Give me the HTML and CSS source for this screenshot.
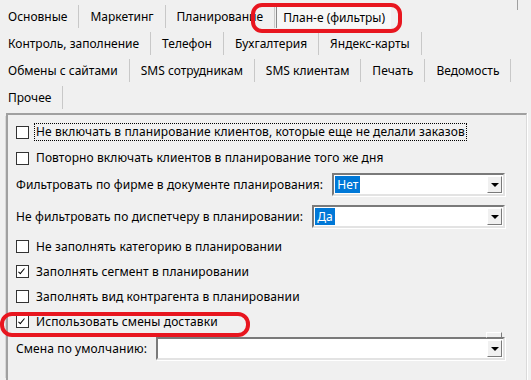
FILE: index.html
```html
<!DOCTYPE html>
<html lang="ru">
<head>
  <meta charset="UTF-8" />
  <title>Настройки планирования</title>
  <link rel="stylesheet" href="styles.css">
</head>
<body>
  <div class="tabs">
    <div class="tab-row row1">
      <div class="tab">Основные</div>
      <div class="tab">Маркетинг</div>
      <div class="tab">Планирование</div>
      <div class="tab active">План-е (фильтры)</div>
    </div>
    <div class="tab-row">
      <div class="tab">Контроль, заполнение</div>
      <div class="tab">Телефон</div>
      <div class="tab">Бухгалтерия</div>
      <div class="tab">Яндекс-карты</div>
    </div>
    <div class="tab-row">
      <div class="tab">Обмены с сайтами</div>
      <div class="tab">SMS сотрудникам</div>
      <div class="tab">SMS клиентам</div>
      <div class="tab">Печать</div>
      <div class="tab">Ведомость</div>
    </div>
    <div class="tab-row">
      <div class="tab">Прочее</div>
    </div>
  </div>

  <div class="panel">
    <div class="row r1">
      <span class="check"></span>
      <span class="label focus">Не включать в планирование клиентов, которые еще не делали заказов</span>
    </div>
    <div class="row r2">
      <span class="check"></span>
      <span class="label">Повторно включать клиентов в планирование того же дня</span>
    </div>
    <div class="row r3">
      <span class="text">Фильтровать по фирме в документе планирования:</span>
      <div class="combo"><span class="value">Нет</span><span class="drop"></span></div>
    </div>
    <div class="row r4">
      <span class="text">Не фильтровать по диспетчеру в планировании:</span>
      <div class="combo"><span class="value">Да</span><span class="drop"></span></div>
    </div>
    <div class="row r5">
      <span class="check"></span>
      <span class="label">Не заполнять категорию в планировании</span>
    </div>
    <div class="row r6">
      <span class="check checked"></span>
      <span class="label">Заполнять сегмент в планировании</span>
    </div>
    <div class="row r7">
      <span class="check"></span>
      <span class="label">Заполнять вид контрагента в планировании</span>
    </div>
    <div class="row r8">
      <span class="check checked"></span>
      <span class="label">Использовать смены доставки</span>
    </div>
    <div class="row r9">
      <span class="text">Смена по умолчанию:</span>
      <div class="combo empty"><span class="stub"></span><span class="drop"></span></div>
    </div>
  </div>

  <div class="mark mark-tab"></div>
  <div class="mark mark-row"></div>
</body>
</html>
```

FILE: styles.css
```css
body {
  margin: 0;
  background: #f0f0f0;
  font-family: "Noto Sans", "Liberation Sans", Arial, sans-serif;
  font-size: 12px;
  color: #000;
  width: 531px;
  height: 380px;
  overflow: hidden;
  position: relative;
}
.tabs {
  padding-top: 5px;
  position: relative;
}
.tabs::after {
  content: "";
  position: absolute;
  right: 13px;
  top: 0;
  height: 10px;
  border-left: 1px solid #a0a0a0;
}
.tab-row {
  display: flex;
  height: 23px;
  margin-bottom: 4px;
}
.tab {
  padding: 0 11px;
  border-right: 1px solid #c8c8c8;
  line-height: 23px;
  white-space: nowrap;
}
.tab:first-child {
  padding-left: 8px;
}
.tab.active {
  border-right: none;
  border-left: 1px solid #8a8a8a;
  background: #f7f7f7;
  margin-left: 1px;
  padding: 0 6px;
  margin-top: 2px;
  line-height: 21px;
}
.panel {
  margin: 2px 4px 0 6px;
  height: 262px;
  border-top: 2px solid #a0a0a0;
  border-left: 2px solid #a0a0a0;
  border-right: 1px solid #dadada;
  box-shadow: 1px 0 0 #fff, -4px 0 0 -3px #d8d8d8;
  padding: 4px 21px 0 8px;
  display: flex;
  flex-direction: column;
  letter-spacing: 0.1px;
}
.row {
  display: flex;
  align-items: center;
  height: 26px;
  white-space: nowrap;
}
.r4 { margin-top: 6px; }
.r5 { margin-top: 5px; }
.r5, .r6, .r7, .r8 { height: 25px; }
.r9 { margin-top: 1px; }
.check {
  width: 11px;
  height: 11px;
  border: 1px solid #333;
  background: #fff;
  margin-right: 5px;
  position: relative;
  flex: none;
}
.check.checked::after {
  content: "";
  position: absolute;
  left: 3px;
  top: 1px;
  width: 2px;
  height: 6px;
  border: solid #000;
  border-width: 0 1.5px 1.5px 0;
  transform: rotate(40deg);
}
.label {
  padding: 0 1px;
  line-height: 16px;
  border: 1px dotted transparent;
}
.label.focus {
  border-color: #000;
}
.text {
  margin-right: 9px;
}
.combo {
  flex: 1;
  height: 19px;
  background: #fff;
  border: 2px solid;
  border-color: #7a7a7a #e3e3e3 #e3e3e3 #7a7a7a;
  box-shadow: 1px 1px 0 #fff;
  display: flex;
  align-items: center;
  position: relative;
}
.value {
  background: #0078d7;
  color: #fff;
  margin-left: 1px;
  padding: 0 2px;
  line-height: 17px;
}
.drop {
  margin-left: auto;
  width: 15px;
  height: 17px;
  margin-right: 1px;
  background: #f0f0f0;
  border: 1px solid;
  border-color: #fff #7a7a7a #7a7a7a #fff;
  box-sizing: border-box;
  position: relative;
}
.drop::after {
  content: "";
  position: absolute;
  left: 3px;
  top: 6px;
  border-left: 4px solid transparent;
  border-right: 4px solid transparent;
  border-top: 4px solid #000;
}
.stub {
  position: absolute;
  right: 1px;
  top: -7px;
  width: 14px;
  height: 4px;
  background: #f0f0f0;
  border: 1px solid;
  border-color: #fff #7a7a7a #7a7a7a #fff;
}
.mark {
  position: absolute;
  border: 4px solid #e8161f;
  border-radius: 11px;
}
.mark-tab {
  left: 251px;
  top: 3px;
  width: 143px;
  height: 22px;
}
.mark-row {
  left: 0;
  top: 312px;
  width: 242px;
  height: 17px;
  border-radius: 12px;
}
```
